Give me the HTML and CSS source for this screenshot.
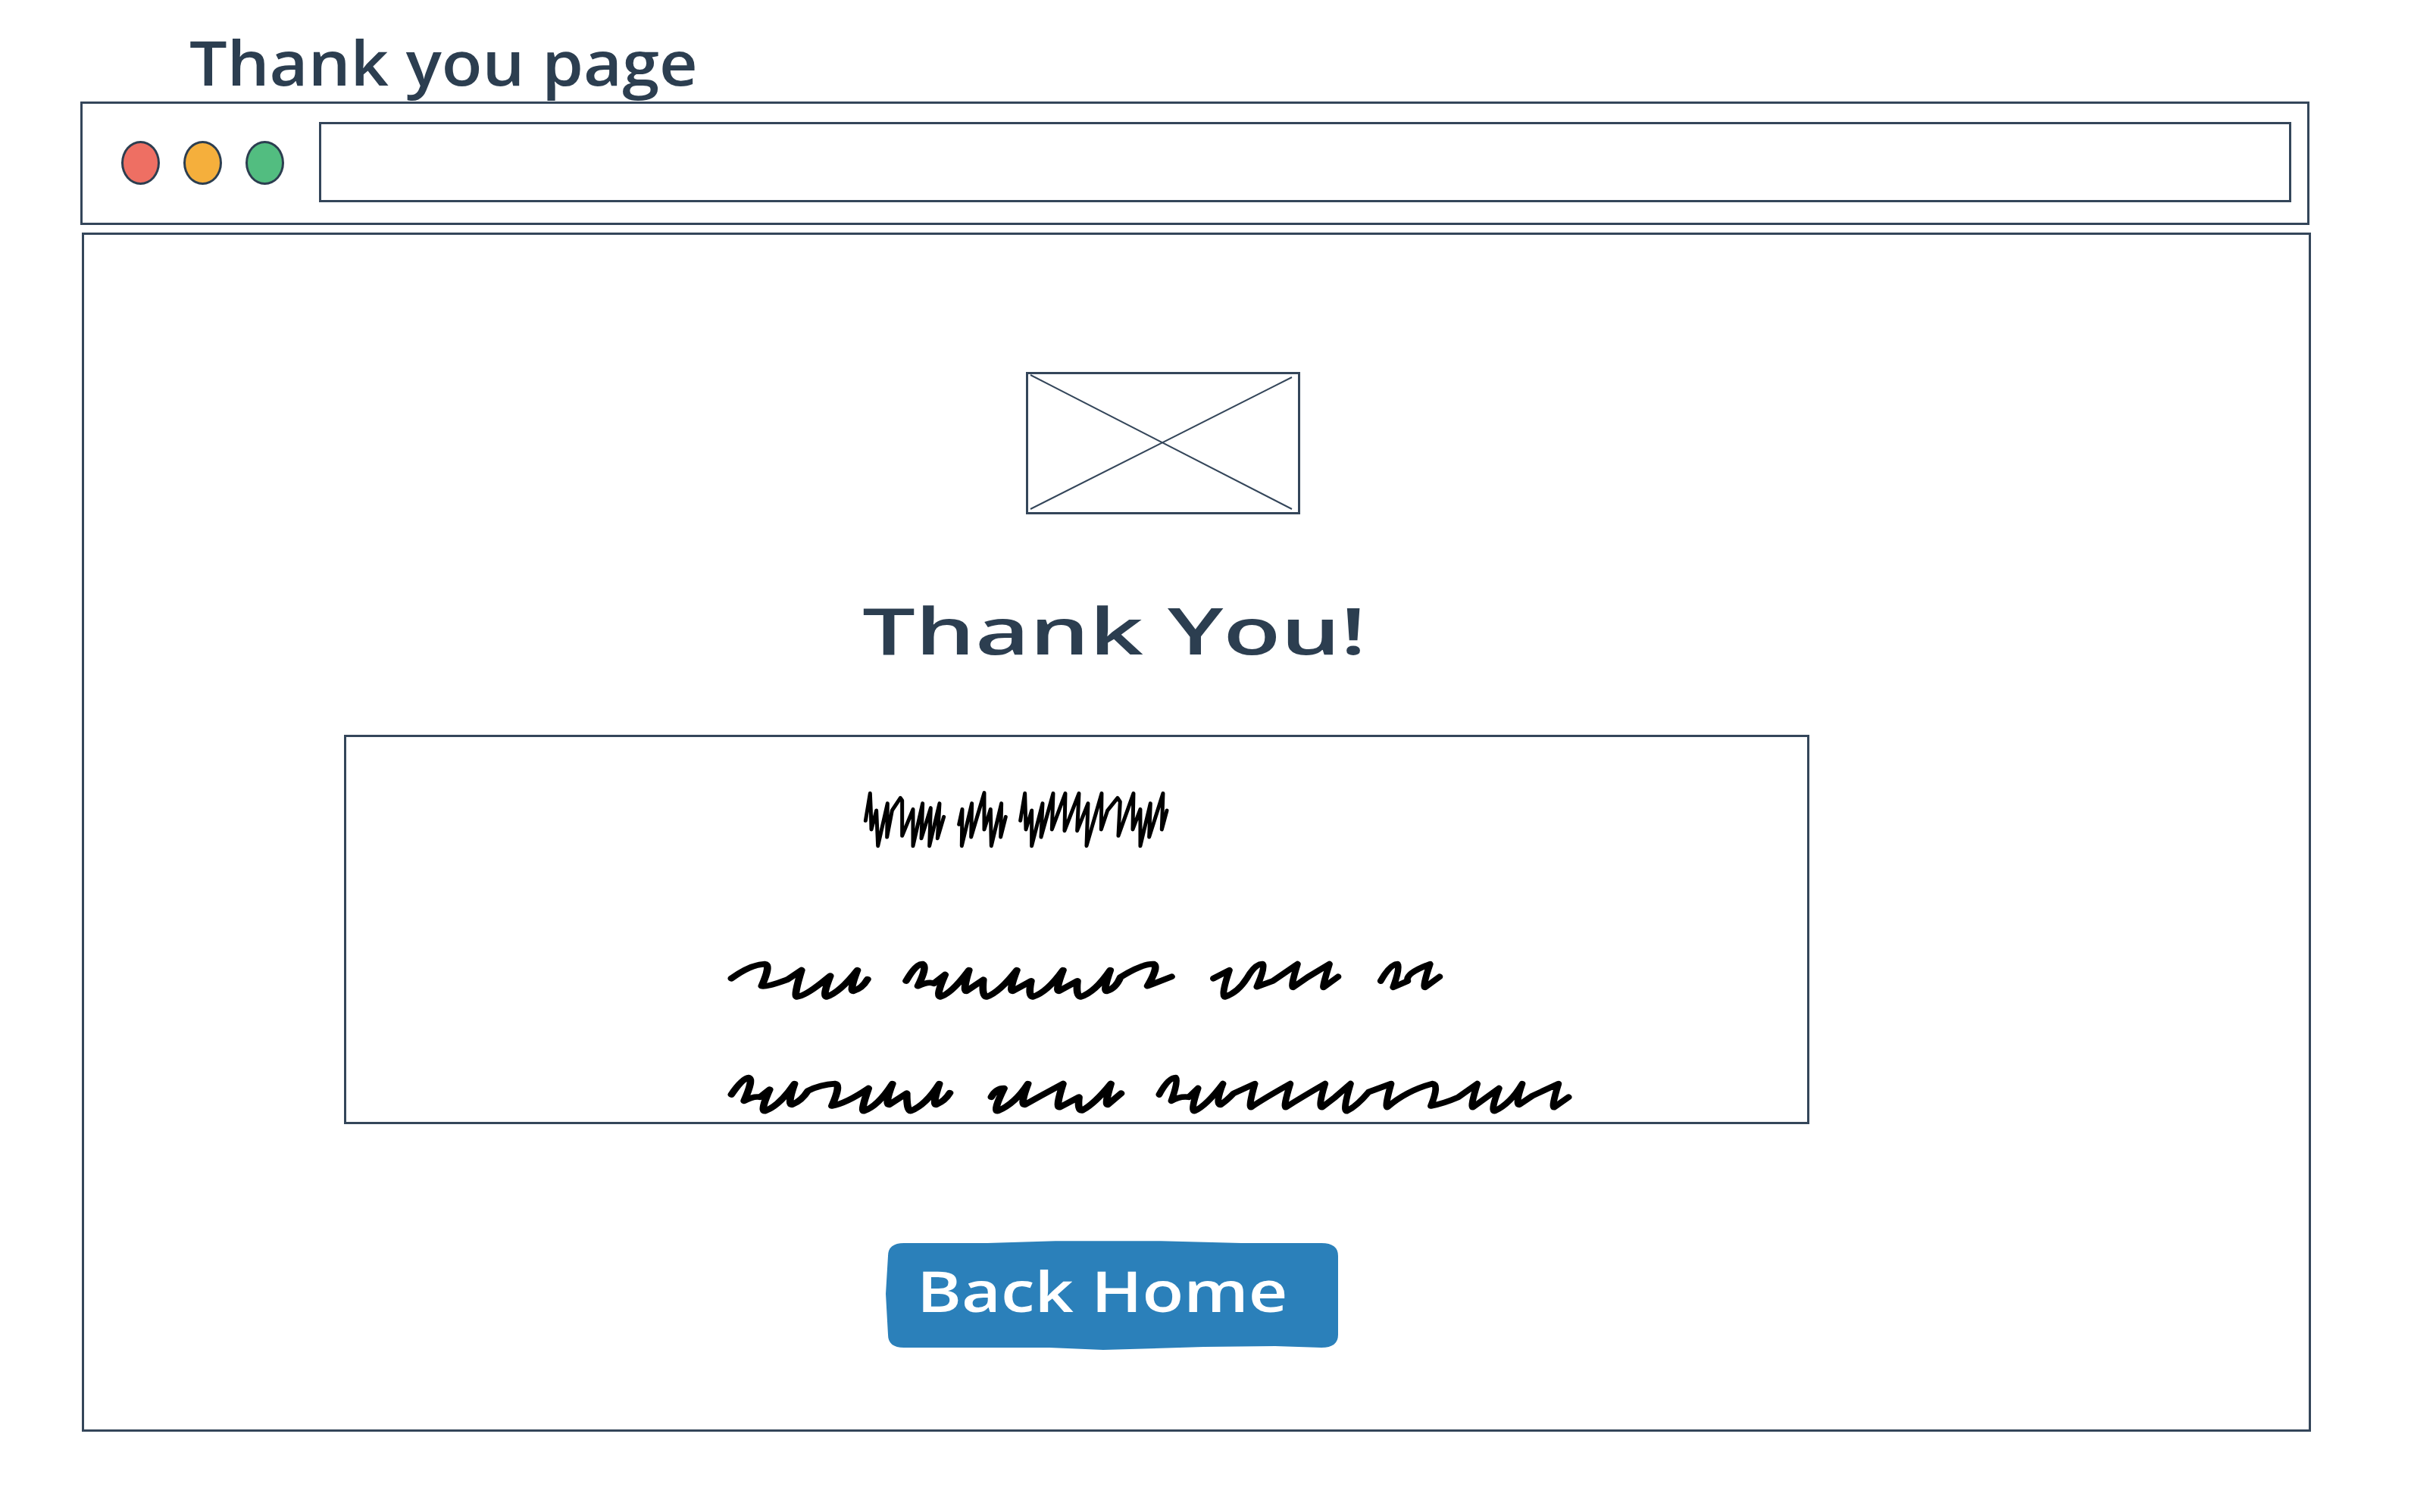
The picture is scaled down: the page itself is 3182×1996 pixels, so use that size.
FILE: index.html
```html
<!DOCTYPE html>
<html lang="en">

<head>
  <meta charset="UTF-8">
  <meta name="viewport" content="width=device-width, initial-scale=1.0">
  <title>Thank you page</title>
  <link rel="stylesheet" href="styles.css">
</head>

<body>
  <div class="page">
    <h2 class="page-title"><span>Thank you page</span></h2>

    <div class="browser-bar">
      <span class="dot dot-red"></span>
      <span class="dot dot-orange"></span>
      <span class="dot dot-green"></span>
      <div class="url-box"></div>
    </div>

    <div class="content">
      <svg class="placeholder" viewBox="1357 494 356 182">
        <path d="M1360 495 L1705 672 M1360 672 L1705 498" />
      </svg>

      <h1 class="thanks"><span>Thank You!</span></h1>

      <div class="message-box">
        <svg class="scribbles" viewBox="457 973 1928 508">
          <!-- heading scribble -->
          <g class="thin" transform="translate(1100 1020) scale(0.3333)">
            <path d="M127 190 L145 82 L148 150 L150 225 L170 150 L176 290 L214 122 L212 255 L232 150 L265 100 L272 110 L272 250 L315 145 L315 290 L353 122 L348 260 L385 140 L380 290 L420 122 L412 260 L437 175" />
            <path d="M497 205 L510 145 L508 290 L548 122 L545 255 L597 80 L597 225 L622 145 L625 290 L665 122 L662 255 L682 175" />
            <path d="M740 190 L758 82 L760 150 L762 225 L785 150 L785 290 L828 122 L822 255 L870 82 L865 225 L918 82 L915 230 L972 82 L965 230 L1008 122 L1002 290 L1062 82 L1060 225 L1085 150 L1125 100 L1135 115 L1128 250 L1188 82 L1185 225 L1215 145 L1215 290 L1255 122 L1250 255 L1305 82 L1300 225 L1320 150" />
          </g>
          <!-- text lines, left part -->
          <g class="thick" transform="translate(940 1240) scale(0.4209 0.3333)">
            <path d="M60 155 Q120 100 165 98 Q185 100 155 185 Q170 190 235 160 L280 122 Q255 225 265 228 Q290 225 345 170 L370 145 Q345 225 358 228 Q400 210 455 122 Q430 205 442 205 Q470 195 487 158" />
            <path d="M608 165 Q640 95 660 98 Q675 110 645 185 Q680 165 695 175 L730 140 Q700 225 715 228 Q750 215 805 122 Q785 205 797 205 L850 160 Q845 225 860 228 Q900 210 955 122 Q930 205 942 205 L1000 165 Q990 225 1005 228 Q1050 210 1100 122 Q1075 205 1087 205 L1145 165 Q1140 225 1155 228 Q1200 210 1248 122 Q1225 205 1237 205 Q1265 195 1280 150 Q1350 95 1385 98 Q1400 110 1365 185 L1440 148" />
            <path d="M60 615 Q95 550 115 548 Q130 555 100 640 Q130 620 150 625 L180 595 Q150 680 165 680 Q210 660 258 572 Q235 655 250 655 Q280 640 300 600 Q340 575 385 572 Q405 575 375 660 Q420 650 490 590 Q465 680 475 680 Q520 660 565 572 Q540 655 555 655 L610 610 Q610 680 622 680 Q670 655 712 572 Q690 655 702 655 Q730 640 745 608" />
            <path d="M875 625 Q890 590 915 590 Q880 680 895 680 Q950 650 990 572 Q965 655 980 655 L1030 620 L1100 572 Q1075 670 1090 665 L1150 625 Q1145 680 1160 678 Q1200 650 1250 572 Q1230 655 1240 655 L1282 610" />
          </g>
          <!-- text lines, right part -->
          <g class="thick" transform="translate(1500 1240) scale(0.3827 0.3333)">
            <path d="M265 155 L320 122 Q290 225 305 228 Q350 210 380 155 Q410 95 435 98 Q445 110 415 188 L470 165 L555 98 Q530 190 540 190 L590 150 L665 98 Q640 190 645 190 L695 148" />
            <path d="M842 165 Q875 98 900 98 Q910 110 885 190 L935 165 Q925 135 1012 98 Q985 190 995 190 L1045 148" />
            <path d="M78 615 Q110 548 135 548 Q145 560 120 640 Q150 620 180 625 L212 590 Q185 680 200 680 Q240 660 298 572 Q270 655 290 655 Q310 640 335 610 L408 572 Q385 665 395 665 Q440 630 530 572 Q505 665 515 665 Q570 625 650 572 Q625 665 640 665 L685 625 L738 572 Q710 680 725 680 Q760 660 800 605 L878 572 Q855 665 865 665 Q930 600 1020 572 Q1045 575 1015 660 Q1060 650 1110 625 L1175 572 Q1150 665 1160 665 L1250 590 Q1220 680 1235 680 Q1290 650 1330 572 Q1305 655 1320 655 L1365 620 L1455 572 Q1430 665 1440 665 L1490 625" />
          </g>
        </svg>
      </div>

      <button class="back-home"><span>Back Home</span></button>
    </div>
  </div>
</body>

</html>
```

FILE: styles.css
```css
body {
  margin: 0;
  background-color: white;
  font-family: "Open Sans", sans-serif;
  color: #2c3e50;
}

.page {
  width: 2942px;
  height: 1996px;
  margin-left: 106px;
}

.page-title {
  height: 134px;
  margin: 0 0 0 144px;
  font-size: 82px;
  font-weight: 600;
  line-height: 162px;
  white-space: nowrap;
}

.page-title span {
  display: inline-block;
  transform: scaleX(1.073);
  transform-origin: left;
}

.browser-bar {
  display: flex;
  align-items: center;
  gap: 31px;
  box-sizing: border-box;
  height: 163px;
  padding-left: 51px;
  padding-right: 21px;
  border: 3px solid #34465a;
}

.dot {
  flex: none;
  box-sizing: border-box;
  width: 51px;
  height: 58px;
  margin-bottom: 2px;
  border: 3px solid #2c3e50;
  border-radius: 50%;
}

.dot-red {
  background-color: #ee6f63;
}

.dot-orange {
  background-color: #f5af3c;
}

.dot-green {
  background-color: #52bd80;
}

.url-box {
  flex: 1;
  box-sizing: border-box;
  height: 106px;
  margin-bottom: 3px;
  margin-left: 15px;
  border: 3px solid #34465a;
}

.content {
  box-sizing: border-box;
  width: 2942px;
  height: 1583px;
  margin-top: 10px;
  margin-left: 2px;
  padding-top: 181px;
  border: 3px solid #34465a;
}

.placeholder {
  display: block;
  box-sizing: border-box;
  width: 362px;
  height: 188px;
  margin-left: 1243px;
  border: 3px solid #34465a;
}

.placeholder path {
  fill: none;
  stroke: #34465a;
  stroke-width: 2;
}

.thanks {
  height: 291px;
  margin: 0 0 0 1027px;
  font-size: 85px;
  font-weight: 600;
  line-height: 304px;
  white-space: nowrap;
}

.thanks span {
  display: inline-block;
  transform: scaleX(1.46);
  transform-origin: left;
}

.message-box {
  box-sizing: border-box;
  width: 1934px;
  height: 514px;
  margin-left: 343px;
  border: 3px solid #34465a;
}

.scribbles {
  display: block;
  width: 1928px;
  height: 508px;
}

.scribbles path {
  fill: none;
  stroke: black;
  stroke-linecap: round;
  stroke-linejoin: round;
}

.thin path {
  stroke-width: 15;
}

.thick path {
  stroke-width: 23;
}

.back-home {
  display: block;
  width: 600px;
  height: 148px;
  margin-top: 153px;
  margin-left: 1057px;
  padding: 0 0 16px 42px;
  border: none;
  background-color: #2b80ba;
  color: white;
  font-family: "Open Sans", sans-serif;
  font-size: 75px;
  font-weight: 600;
  text-align: left;
  white-space: nowrap;
  clip-path: path("M25 4 L135 4 L225 1.3 L364 1.3 L470 4 L576 4 Q598 4 598 21 L598 125 Q598 142 576 142 L515 140 L421 141 L288 145 L217 142 L25 142 Q4 142 4 125 L1 71 L4 21 Q4 4 25 4 Z");
}

.back-home span {
  display: inline-block;
  transform: scaleX(1.195);
  transform-origin: left;
}
```
